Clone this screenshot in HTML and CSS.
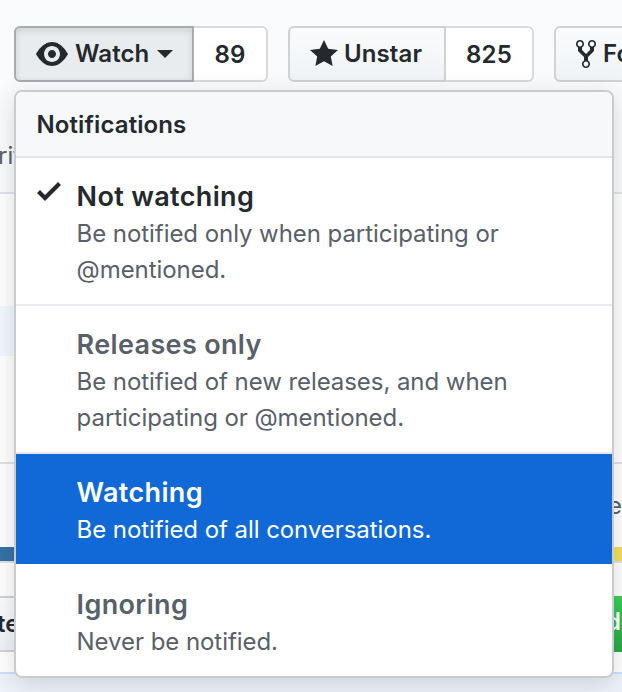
FILE: index.html
```html
<!DOCTYPE html>
<html lang="en">
<head>
<meta charset="utf-8">
<title>Watch notifications</title>
<link rel="stylesheet" href="styles.css">
</head>
<body>
<div class="page">
  <header class="head">
    <div class="actions">
      <div class="group">
        <button class="btn btn-pressed">
          <svg class="ic-eye" viewBox="0 0 16 16"><path d="M8.06 2C3 2 0 8 0 8s3 6 8.06 6C13 14 16 8 16 8s-3-6-7.94-6zM8 12c-2.2 0-4-1.78-4-4 0-2.2 1.8-4 4-4 2.22 0 4 1.8 4 4 0 2.22-1.78 4-4 4zm2-4c0 1.11-.89 2-2 2-1.11 0-2-.89-2-2 0-1.11.89-2 2-2 1.11 0 2 .89 2 2z"/></svg>
          <span>Watch</span>
          <span class="caret"></span>
        </button>
        <span class="count count-watch">89</span>
      </div>
      <div class="group">
        <button class="btn btn-star">
          <svg class="ic-star" viewBox="0 0 14 16"><path d="M14 6l-4.9-.64L7 1 4.9 5.36 0 6l3.6 3.26L2.67 14 7 11.67 11.33 14l-.93-4.74L14 6z"/></svg>
          <span>Unstar</span>
        </button>
        <span class="count count-star">825</span>
      </div>
      <div class="group">
        <button class="btn btn-fork">
          <svg class="ic-fork" viewBox="0 0 10 16"><path d="M8 1a1.993 1.993 0 0 0-1 3.72V6L5 8 3 6V4.72A1.993 1.993 0 0 0 2 1a1.993 1.993 0 0 0-1 3.72V6.5l3 3v1.78A1.993 1.993 0 0 0 5 15a1.993 1.993 0 0 0 1-3.72V9.5l3-3V4.72A1.993 1.993 0 0 0 8 1zM2 4.2C1.34 4.2.8 3.65.8 3c0-.65.55-1.2 1.2-1.2.65 0 1.2.55 1.2 1.2 0 .65-.55 1.2-1.2 1.2zm3 10c-.66 0-1.2-.55-1.2-1.2 0-.65.55-1.2 1.2-1.2.65 0 1.2.55 1.2 1.2 0 .65-.55 1.2-1.2 1.2zm3-10c-.66 0-1.2-.55-1.2-1.2 0-.65.55-1.2 1.2-1.2.65 0 1.2.55 1.2 1.2 0 .65-.55 1.2-1.2 1.2z"/></svg>
          <span>Fork</span>
        </button>
      </div>
    </div>
    <div class="tab">rit</div>
  </header>

  <div class="under">
    <div class="row-white r1"></div>
    <div class="row-blue"></div>
    <div class="row-white r2"></div>
    <div class="row-text"><span>e</span></div>
    <div class="langbar"><i class="lang-a"></i><i class="lang-b"></i></div>
    <div class="row-white r3"></div>
    <div class="filebar"><span class="file-t">te</span><span class="file-btn">d</span></div>
    <div class="row-white r4"></div>
    <div class="foot"></div>
  </div>

  <div class="menu">
    <div class="menu-head">Notifications</div>
    <div class="item">
      <div class="check"><svg viewBox="0 0 12 16"><path d="M12 5l-8 8-4-4 1.5-1.5L4 10l6.5-6.5L12 5z"/></svg></div>
      <div>
        <div class="title title-on">Not watching</div>
        <div class="desc">Be notified only when participating or<br>@mentioned.</div>
      </div>
    </div>
    <div class="item">
      <div class="check"></div>
      <div>
        <div class="title">Releases only</div>
        <div class="desc">Be notified of new releases, and when<br>participating or @mentioned.</div>
      </div>
    </div>
    <div class="item item-active">
      <div class="check"></div>
      <div>
        <div class="title">Watching</div>
        <div class="desc">Be notified of all conversations.</div>
      </div>
    </div>
    <div class="item item-last">
      <div class="check"></div>
      <div>
        <div class="title">Ignoring</div>
        <div class="desc">Never be notified.</div>
      </div>
    </div>
  </div>
</div>
</body>
</html>
```
FILE: styles.css
```css
* { box-sizing: border-box; }
html, body { margin: 0; height: 100%; }
body {
  font-family: Inter, "Liberation Sans", sans-serif;
  color: #24292e;
  background: #fff;
  overflow: hidden;
}
.page { position: relative; width: 622px; height: 692px; overflow: hidden; }

.head {
  height: 194px;
  background: #fafbfc;
  border-bottom: 2px solid #e1e4e8;
  padding: 26px 0 0 14px;
}
.actions { display: flex; gap: 20px; white-space: nowrap; }
.group { display: flex; height: 56px; }
.btn {
  display: flex;
  align-items: center;
  height: 56px;
  padding: 0 0 0 20px;
  font: 600 24px/1 Inter, "Liberation Sans", sans-serif;
  letter-spacing: .1px;
  color: #24292e;
  background: linear-gradient(#fafbfc, #eff3f6);
  border: 2px solid #d0d2d4;
  border-radius: 6px 0 0 6px;
}
.btn-pressed {
  width: 180px;
  background: #e9ecef;
  border-color: #a8abaf;
  box-shadow: inset 0 3px 6px rgba(27,31,35,.12);
}
.btn-star { width: 158px; }
.btn-fork { width: 120px; border-radius: 6px; }
.ic-eye { width: 32px; height: 32px; margin-right: 7px; fill: #24292e; }
.ic-star { width: 28px; height: 32px; margin-right: 6px; fill: #24292e; }
.ic-fork { width: 20px; height: 32px; margin-right: 7px; fill: #24292e; }
.caret {
  width: 0; height: 0;
  margin-left: 8px;
  border: 8px solid transparent;
  border-top-color: #24292e;
  border-bottom-width: 0;
}
.count {
  display: flex;
  align-items: center;
  justify-content: center;
  height: 56px;
  font-size: 24px;
  font-weight: 600;
  letter-spacing: .2px;
  background: #fff;
  border: 2px solid #d8dadc;
  border-left: 0;
  border-radius: 0 6px 6px 0;
}
.count-watch { width: 74px; }
.count-star { width: 88px; }
.tab {
  margin: 59px 0 0 -16px;
  font-size: 24px;
  line-height: 30px;
  color: #586069;
}

.r1 { height: 112px; }
.row-blue { height: 50px; background: linear-gradient(90deg, #f1f8ff 300px, #fff 300px); }
.r2 { height: 108px; border-bottom: 2px solid #dfe2e5; }
.row-text { height: 83px; padding: 27px 0 0 608px; font-size: 24px; line-height: 30px; color: #586069; background: #fff; }
.row-white { background: #fff; }
.langbar { display: flex; height: 16px; border-bottom: 2px solid #dfe2e5; }
.lang-a { width: 50%; background: #3572a5; }
.lang-b { width: 50%; background: #f1e05a; }
.r3 { height: 33px; }
.filebar {
  display: flex;
  justify-content: space-between;
  height: 56px;
  font-size: 24px;
  font-weight: 600;
  line-height: 52px;
  background: linear-gradient(#fafbfc, #eff3f6);
  border-top: 2px solid #d0d2d4;
  border-bottom: 2px solid #d0d2d4;
}
.file-t { margin-left: -3px; }
.file-btn {
  width: 10px;
  margin-top: -2px;
  height: 56px;
  color: #fff;
  text-indent: -6px;
  overflow: hidden;
  background: linear-gradient(#34d058, #28a745);
}
.r4 { height: 22px; border-bottom: 2px solid #c8e1ff; }
.foot { height: 18px; background: #eef3f9; }

.page::after {
  content: "";
  position: absolute;
  left: 14px;
  top: 90px;
  width: 600px;
  height: 588px;
  border-radius: 8px;
  box-shadow: 0 6px 24px rgba(27,31,35,.16);
  pointer-events: none;
}
.menu {
  position: absolute;
  z-index: 1;
  left: 14px;
  top: 90px;
  width: 600px;
  height: 588px;
  background: #fff;
  border: 2px solid #c9cbcd;
  border-radius: 8px;
  overflow: hidden;
}
.menu-head {
  height: 66px;
  padding-left: 20.5px;
  font-size: 24px;
  font-weight: 600;
  line-height: 65px;
  letter-spacing: .1px;
  background: #f6f8fa;
  border-bottom: 2px solid #e1e4e8;
}
.item {
  display: flex;
  gap: 16px;
  height: 148px;
  padding: 20px 0 0 20px;
  color: #586069;
  border-bottom: 2px solid #e8eaed;
}
.check { width: 24.6px; flex: none; }
.check svg { display: block; width: 24px; height: 32px; margin: -3px 0 0 1px; fill: #24292e; }
.title { font-size: 27px; font-weight: 600; line-height: 38px; letter-spacing: .35px; }
.title-on { color: #24292e; }
.desc { font-size: 24px; line-height: 36px; letter-spacing: -.06px; color: #586069; }
.item-active { height: 110px; color: #fff; background: #1069d6; border-bottom: 0; }
.item-active .desc { color: #fff; }
.item-last { height: 112px; padding-top: 22px; border-bottom: 0; }
```
